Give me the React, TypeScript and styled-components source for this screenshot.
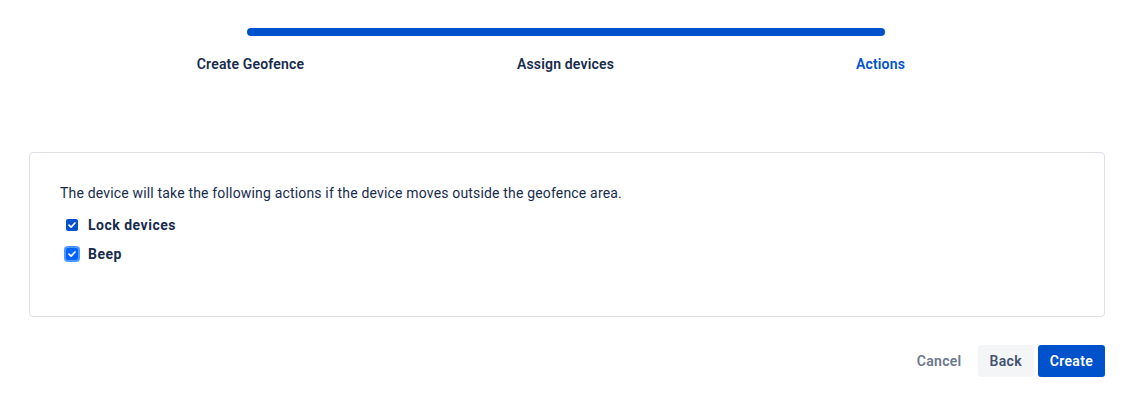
import React from "react";
import styled, { createGlobalStyle } from "styled-components";

const Global = createGlobalStyle`
  html, body { margin: 0; padding: 0; background: #fff; }
  body { font-family: Roboto, "Noto Sans", sans-serif; color: #172b4d; -webkit-font-smoothing: antialiased; letter-spacing: 0.17px; }
  * { box-sizing: border-box; }
`;

const Page = styled.div`
  padding: 28px 16px 0 29px;
`;

const Stepper = styled.div`
  margin-left: 64px;
  width: 945px;
`;

const Track = styled.div`
  height: 8px;
  margin: 0 153px 0 154px;
  border-radius: 4px;
  background: #0052cc;
`;

const Labels = styled.div`
  display: grid;
  grid-template-columns: repeat(3, 315px);
  margin-top: 18px;
`;

const StepLabel = styled.div<{ $active?: boolean }>`
  text-align: center;
  font-size: 14px;
  line-height: 20px;
  font-weight: 600;
  color: ${(p) => (p.$active ? "#0052cc" : "#172b4d")};
`;

const Card = styled.section`
  margin-top: 78px;
  border: 1px solid #dfe1e6;
  border-radius: 4px;
  padding: 30px 30px 48px;
`;

const Intro = styled.p`
  margin: 0 0 7px;
  font-size: 14px;
  line-height: 20px;
  color: #172b4d;
`;

const Option = styled.label`
  display: flex;
  align-items: center;
  gap: 10px;
  height: 29px;
  padding-left: 6px;
  font-size: 14px;
  font-weight: 700;
  letter-spacing: 0.5px;
  color: #172b4d;
  cursor: pointer;
`;

const Box = styled.span<{ $focus?: boolean }>`
  width: 12px;
  height: 12px;
  border-radius: 2px;
  background: ${(p) => (p.$focus ? "#0065ff" : "#0052cc")};
  display: flex;
  align-items: center;
  justify-content: center;
  box-shadow: ${(p) => (p.$focus ? "0 0 0 2px #4c9aff" : "none")};
`;

const Footer = styled.div`
  display: flex;
  justify-content: flex-end;
  gap: 4px;
  margin-top: 28px;
`;

const Button = styled.button<{ $variant: "subtle" | "default" | "primary" }>`
  height: 32px;
  padding: 0 12px;
  border: none;
  border-radius: 3px;
  font-family: inherit;
  font-size: 14px;
  font-weight: 600;
  letter-spacing: 0.3px;
  cursor: pointer;
  background: ${(p) =>
    p.$variant === "primary" ? "#0052cc" : p.$variant === "default" ? "#f4f5f7" : "transparent"};
  color: ${(p) =>
    p.$variant === "primary" ? "#fff" : p.$variant === "default" ? "#42526e" : "#6b778c"};
`;

const Check = () => (
  <svg width="10" height="10" viewBox="0 0 10 10">
    <path d="M2 5.2 L4.1 7.2 L8 3" fill="none" stroke="#fff" strokeWidth="1.7" strokeLinecap="round" strokeLinejoin="round" />
  </svg>
);

export default function App() {
  return (
    <>
      <Global />
      <Page>
        <Stepper>
          <Track />
          <Labels>
            <StepLabel>Create Geofence</StepLabel>
            <StepLabel>Assign devices</StepLabel>
            <StepLabel $active>Actions</StepLabel>
          </Labels>
        </Stepper>
        <Card>
          <Intro>The device will take the following actions if the device moves outside the geofence area.</Intro>
          <Option>
            <Box><Check /></Box>
            Lock devices
          </Option>
          <Option>
            <Box $focus><Check /></Box>
            Beep
          </Option>
        </Card>
        <Footer>
          <Button $variant="subtle">Cancel</Button>
          <Button $variant="default">Back</Button>
          <Button $variant="primary">Create</Button>
        </Footer>
      </Page>
    </>
  );
}
